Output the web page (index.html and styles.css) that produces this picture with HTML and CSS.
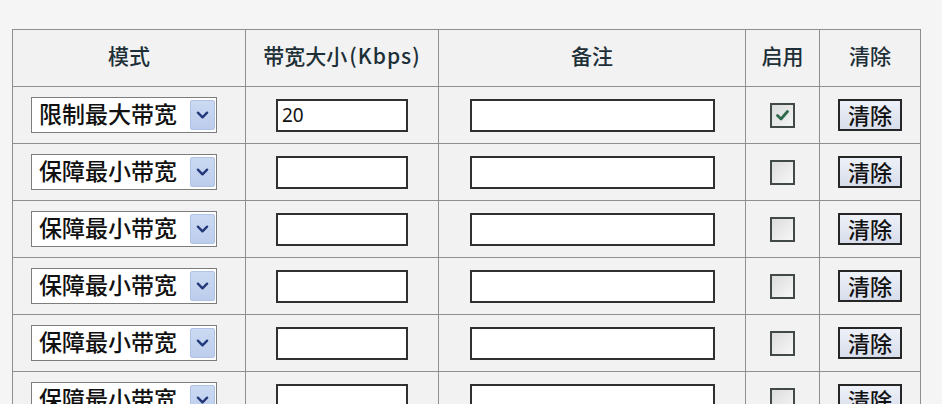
FILE: index.html
```html
<!DOCTYPE html>
<html lang="zh-CN">
<head>
<meta charset="utf-8">
<title>带宽控制规则</title>
<link rel="stylesheet" href="styles.css">
</head>
<body>
<div class="grid">
  <div class="cell head">模式</div>
  <div class="cell head">带宽大小<span class="unit">(Kbps)</span></div>
  <div class="cell head">备注</div>
  <div class="cell head">启用</div>
  <div class="cell head">清除</div>

  <div class="cell mode"><div class="sel"><span class="sel-text">限制最大带宽</span><span class="sel-btn"><svg width="25" height="30" viewBox="0 0 25 30"><polyline points="7.5,12.5 12.5,17.5 17.5,12.5" fill="none" stroke="#24397a" stroke-width="2.6" stroke-linecap="round" stroke-linejoin="round"/></svg></span></div></div>
  <div class="cell"><input class="inp bw" type="text" value="20"></div>
  <div class="cell"><input class="inp note" type="text" value=""></div>
  <div class="cell"><span class="cb checked"><svg width="21" height="21" viewBox="0 0 21 21"><polyline points="5.5,10.5 9,14 15.5,6.5" fill="none" stroke="#2f6a4c" stroke-width="2.8" stroke-linecap="round" stroke-linejoin="round"/></svg></span></div>
  <div class="cell"><button class="clr" type="button">清除</button></div>

  <div class="cell mode"><div class="sel"><span class="sel-text">保障最小带宽</span><span class="sel-btn"><svg width="25" height="30" viewBox="0 0 25 30"><polyline points="7.5,12.5 12.5,17.5 17.5,12.5" fill="none" stroke="#24397a" stroke-width="2.6" stroke-linecap="round" stroke-linejoin="round"/></svg></span></div></div>
  <div class="cell"><input class="inp bw" type="text" value=""></div>
  <div class="cell"><input class="inp note" type="text" value=""></div>
  <div class="cell"><span class="cb"></span></div>
  <div class="cell"><button class="clr" type="button">清除</button></div>

  <div class="cell mode"><div class="sel"><span class="sel-text">保障最小带宽</span><span class="sel-btn"><svg width="25" height="30" viewBox="0 0 25 30"><polyline points="7.5,12.5 12.5,17.5 17.5,12.5" fill="none" stroke="#24397a" stroke-width="2.6" stroke-linecap="round" stroke-linejoin="round"/></svg></span></div></div>
  <div class="cell"><input class="inp bw" type="text" value=""></div>
  <div class="cell"><input class="inp note" type="text" value=""></div>
  <div class="cell"><span class="cb"></span></div>
  <div class="cell"><button class="clr" type="button">清除</button></div>

  <div class="cell mode"><div class="sel"><span class="sel-text">保障最小带宽</span><span class="sel-btn"><svg width="25" height="30" viewBox="0 0 25 30"><polyline points="7.5,12.5 12.5,17.5 17.5,12.5" fill="none" stroke="#24397a" stroke-width="2.6" stroke-linecap="round" stroke-linejoin="round"/></svg></span></div></div>
  <div class="cell"><input class="inp bw" type="text" value=""></div>
  <div class="cell"><input class="inp note" type="text" value=""></div>
  <div class="cell"><span class="cb"></span></div>
  <div class="cell"><button class="clr" type="button">清除</button></div>

  <div class="cell mode"><div class="sel"><span class="sel-text">保障最小带宽</span><span class="sel-btn"><svg width="25" height="30" viewBox="0 0 25 30"><polyline points="7.5,12.5 12.5,17.5 17.5,12.5" fill="none" stroke="#24397a" stroke-width="2.6" stroke-linecap="round" stroke-linejoin="round"/></svg></span></div></div>
  <div class="cell"><input class="inp bw" type="text" value=""></div>
  <div class="cell"><input class="inp note" type="text" value=""></div>
  <div class="cell"><span class="cb"></span></div>
  <div class="cell"><button class="clr" type="button">清除</button></div>

  <div class="cell mode"><div class="sel"><span class="sel-text">保障最小带宽</span><span class="sel-btn"><svg width="25" height="30" viewBox="0 0 25 30"><polyline points="7.5,12.5 12.5,17.5 17.5,12.5" fill="none" stroke="#24397a" stroke-width="2.6" stroke-linecap="round" stroke-linejoin="round"/></svg></span></div></div>
  <div class="cell"><input class="inp bw" type="text" value=""></div>
  <div class="cell"><input class="inp note" type="text" value=""></div>
  <div class="cell"><span class="cb"></span></div>
  <div class="cell"><button class="clr" type="button">清除</button></div>
</div>
</body>
</html>
```

FILE: styles.css
```css
html, body {
  margin: 0;
  padding: 0;
  overflow: hidden;
  background: #f5f5f5;
  font-family: "Noto Sans CJK SC", "Noto Sans", sans-serif;
  color: #111;
}

.grid {
  display: grid;
  grid-template-columns: 232px 192px 306px 73px 100px;
  grid-auto-rows: 56px;
  gap: 1px;
  width: max-content;
  margin: 29px 0 0 12px;
  background: #8f8f8f;
  border: 1px solid #8f8f8f;
}

.cell {
  background: #f2f2f2;
  display: flex;
  align-items: center;
  justify-content: center;
}

.head {
  font-size: 21px;
  font-weight: 500;
  color: #1d2f37;
  line-height: 1;
  padding-bottom: 5px;
}

.unit {
  letter-spacing: 1px;
  margin-left: 2px;
}

.mode {
  justify-content: flex-start;
  padding-left: 18px;
}

.sel {
  width: 186px;
  height: 36px;
  box-sizing: border-box;
  border: 1px solid #7d7d7d;
  background: #fff;
  display: flex;
  align-items: center;
  padding: 0 1px 0 7px;
}

.sel-text {
  flex: 1;
  font-size: 23px;
  font-weight: 500;
  line-height: 1;
  color: #111;
  padding-bottom: 3px;
}

.sel-btn {
  width: 25px;
  height: 30px;
  box-sizing: border-box;
  background: linear-gradient(#cbd9f2, #bccdec);
  border: 1px solid #b0c3e6;
  border-radius: 2px;
  display: flex;
  align-items: center;
  justify-content: center;
}

.sel-btn svg {
  display: block;
}

.inp {
  height: 33px;
  box-sizing: border-box;
  border: 2px solid #303030;
  background: #fff;
  padding: 0 4px;
  margin: 0;
  font-family: "Noto Sans", sans-serif;
  font-size: 19px;
  color: #111;
  outline: none;
}

.bw {
  width: 132px;
}

.note {
  width: 245px;
}

.cb {
  width: 25px;
  height: 25px;
  box-sizing: border-box;
  border: 2px solid #424a46;
  background: linear-gradient(135deg, #dcdcdc, #f7f7f7);
  display: flex;
  align-items: center;
  justify-content: center;
}

.cb.checked {
  background: linear-gradient(135deg, #d8dcda, #f3f5f4);
}

.clr {
  width: 64px;
  height: 32px;
  box-sizing: border-box;
  border: 2px solid #262626;
  background: linear-gradient(#eef1f8, #d7ddeb);
  padding: 0 0 3px;
  margin: 0;
  font-family: "Noto Sans CJK SC", sans-serif;
  font-size: 22px;
  font-weight: 500;
  line-height: 1;
  color: #111;
}
```
